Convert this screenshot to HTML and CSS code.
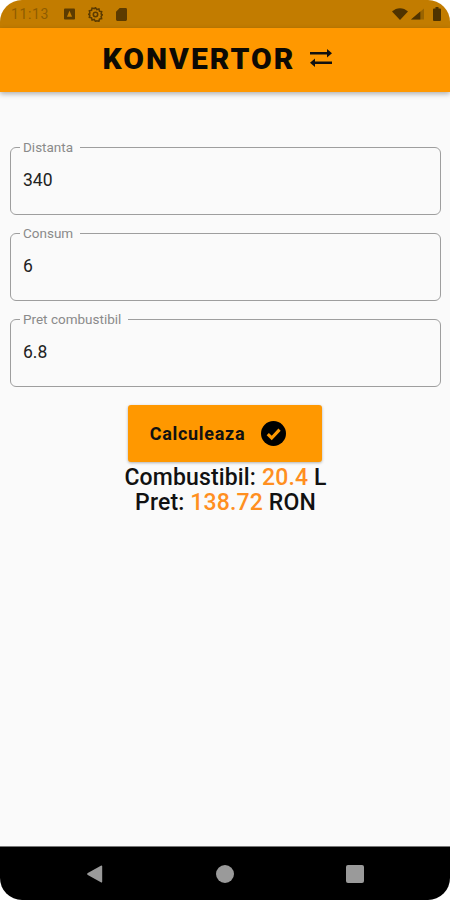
FILE: index.html
```html
<!DOCTYPE html>
<html lang="en">
<head>
    <meta charset="UTF-8">
    <meta name="viewport" content="width=device-width, initial-scale=1.0">
    <title>Konvertor</title>
    <link rel="stylesheet" href="styles.css">
</head>
<body>
    <div class="screen">
        <div class="status-bar">
            <div class="status-left">
                <span class="clock">11:13</span>
                <svg class="status-icon" viewBox="0 0 12 12"><path d="M0 1a1 1 0 0 1 1-1h10a1 1 0 0 1 1 1v10a1 1 0 0 1-1 1H1a1 1 0 0 1-1-1z"/><path class="cut" d="M6 2.500 8.800 9H3.200z"/></svg>
                <svg class="status-icon gear" viewBox="0 0 24 24"><path d="M12 1l2 3 3.500-.8.800 3.500 3.500.8-.8 3.500 2 1.500-2 2.500.8 3.500-3.500.8-.8 3.500-3.500-.8L12 23l-2-3-3.500.8-.8-3.500-3.500-.8.800-3.500L1 12l2-2.500-.8-3.500 3.500-.8.800-3.500 3.500.8z" fill="none" stroke="#5c3b00" stroke-width="2.500"/><circle cx="12" cy="12" r="3.500" fill="none" stroke="#5c3b00" stroke-width="2.500"/></svg>
                <svg class="status-icon sd" viewBox="0 0 12 14"><path d="M4 0h6.500A1.500 1.500 0 0 1 12 1.500v11a1.500 1.500 0 0 1-1.500 1.500h-9A1.500 1.500 0 0 1 0 12.500V4z"/></svg>
            </div>
            <div class="status-right">
                <svg class="wifi" viewBox="0 0 16 12"><path d="M0 3.500C4.500-1 11.500-1 16 3.500L8 12z"/></svg>
                <svg class="signal" viewBox="0 0 14 12"><path d="M14 0v12H0z" fill="#9a6400"/><path d="M10 3.430V12H0z"/></svg>
                <svg class="battery" viewBox="0 0 8 14"><path d="M2.500 0h3v1.500H7a1 1 0 0 1 1 1V13a1 1 0 0 1-1 1H1a1 1 0 0 1-1-1V2.500a1 1 0 0 1 1-1h1.500z"/></svg>
            </div>
        </div>

        <header class="app-bar">
            <h1>KONVERTOR</h1>
            <svg class="swap-icon" viewBox="1 0 22 18"><path d="M18 0l5 4.200-5 4.200V5.400H1V3h17zM6 9.600v3h17V15H6v3l-5-4.200z"/></svg>
        </header>

        <main class="content">
            <fieldset class="field">
                <legend>Distanta</legend>
                <div class="value">340</div>
            </fieldset>
            <fieldset class="field">
                <legend>Consum</legend>
                <div class="value">6</div>
            </fieldset>
            <fieldset class="field">
                <legend>Pret combustibil</legend>
                <div class="value">6.8</div>
            </fieldset>

            <button class="calc-btn" type="button">
                Calculeaza
                <svg class="check-icon" viewBox="0 0 24 24"><circle cx="12" cy="12" r="12" fill="#000"/><path d="M6.500 12.500l3.800 3.800 7.500-8" fill="none" stroke="#ff9800" stroke-width="3"/></svg>
            </button>

            <div class="results">
                <p>Combustibil: <span class="num">20.4</span> L</p>
                <p>Pret: <span class="num">138.72</span> RON</p>
            </div>
        </main>

        <nav class="nav-bar">
            <svg class="nav-icon" viewBox="0 0 18 20"><path d="M17 1.500v17a1 1 0 0 1-1.500.8L1 11a1.200 1.200 0 0 1 0-2L15.500.7A1 1 0 0 1 17 1.500z"/></svg>
            <svg class="nav-icon" viewBox="0 0 18 18"><circle cx="9" cy="9" r="9"/></svg>
            <svg class="nav-icon" viewBox="0 0 18 18"><rect width="18" height="18" rx="2"/></svg>
        </nav>
    </div>
</body>
</html>
```

FILE: styles.css
```css
html, body {
    margin: 0;
    padding: 0;
    background: #ffffff;
}

.screen {
    width: 450px;
    height: 900px;
    display: flex;
    flex-direction: column;
    background: #fafafa;
    border-radius: 22px;
    overflow: hidden;
    font-family: Roboto, sans-serif;
    color: #111;
}

.status-bar {
    height: 28px;
    flex: none;
    display: flex;
    justify-content: space-between;
    align-items: center;
    padding: 0 9px 0 11px;
    box-sizing: border-box;
    background: #c27c00;
}

.status-left, .status-right {
    display: flex;
    align-items: center;
}

.clock {
    font-size: 14px;
    letter-spacing: 0.6px;
    color: #8f5c00;
    margin-right: 15px;
}

.status-icon {
    width: 11px;
    height: 12px;
    fill: #5c3b00;
    margin-right: 13px;
}

.status-icon .cut {
    fill: #c27c00;
}

.status-icon.gear {
    width: 15px;
    height: 15px;
}

.status-icon.sd {
    height: 13px;
}

.wifi {
    width: 16px;
    height: 12px;
    fill: #4f3300;
    margin-right: 3px;
}

.signal {
    width: 13px;
    height: 12px;
    fill: #4f3300;
    margin-right: 9px;
}

.battery {
    width: 8px;
    height: 14px;
    fill: #4f3300;
}

.app-bar {
    height: 64px;
    flex: none;
    display: flex;
    justify-content: center;
    align-items: center;
    gap: 14px;
    padding: 0 14px 4px 0;
    box-sizing: border-box;
    background: #ff9800;
    box-shadow: 0 2px 5px rgba(0, 0, 0, 0.3);
    position: relative;
}

h1 {
    margin: 0;
    font-size: 30px;
    font-weight: 900;
    letter-spacing: 2px;
    color: #0d0a04;
}

.swap-icon {
    width: 24px;
    height: 18px;
    fill: #111;
}

.content {
    flex: 1;
    display: flex;
    flex-direction: column;
    align-items: center;
    padding: 47px 9px 0 10px;
}

.field {
    width: 100%;
    height: 76px;
    margin: 0 0 10px;
    padding: 0 0 0 12px;
    box-sizing: border-box;
    border: 1px solid #9e9e9e;
    border-radius: 6px;
}

.field legend {
    margin-left: -3px;
    padding: 0 7px 0 3px;
    font-size: 13.5px;
    line-height: 16px;
    color: #8a8a8a;
}

.value {
    font-size: 17.5px;
    line-height: 20px;
    margin-top: 15px;
    color: #222;
}

.calc-btn {
    width: 194px;
    height: 57px;
    margin: 8px 1px 0 0;
    padding: 0 14px 0 0;
    display: flex;
    align-items: center;
    justify-content: center;
    gap: 16px;
    border: none;
    border-radius: 3px;
    background: #ff9800;
    box-shadow: 0 1px 3px rgba(0, 0, 0, 0.3);
    font-family: Roboto, sans-serif;
    font-size: 18px;
    font-weight: 700;
    letter-spacing: 0.7px;
    color: #111;
}

.check-icon {
    width: 25px;
    height: 25px;
}

.results {
    margin-top: 3px;
    text-align: center;
    font-size: 23px;
    font-weight: 500;
    letter-spacing: 0.15px;
    line-height: 25px;
}

.results p {
    margin: 0;
}

.num {
    color: #ff8f1f;
}

.nav-bar {
    height: 54px;
    flex: none;
    display: flex;
    justify-content: center;
    align-items: center;
    gap: 112px;
    background: #000;
    border-top: 1px solid #777;
    box-sizing: border-box;
}

.nav-icon {
    width: 18px;
    height: 18px;
    fill: #9a9a9a;
}
```
